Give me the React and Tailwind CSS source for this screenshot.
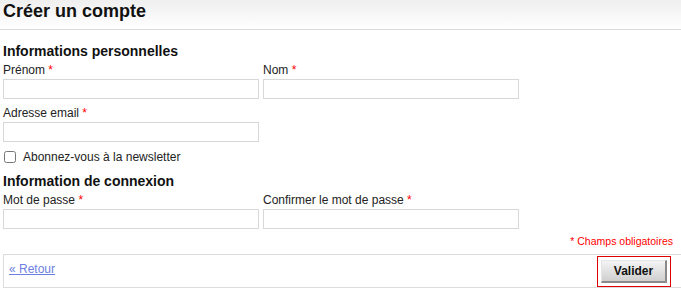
import { useState } from "react";

const Req = () => <span className="text-[#ff0000]"> *</span>;

function Field({ label, required, type = "text", autoFocus }) {
  return (
    <div className="flex flex-col">
      <label className="text-[12px] leading-[14px] text-[#222] h-[14px] mb-[2px]">
        {label}
        {required && <Req />}
      </label>
      <input
        type={type}
        autoFocus={autoFocus}
        className="w-[256px] h-[20px] border border-[#d8d8d8] bg-white px-1 text-[12px] outline-none"
      />
    </div>
  );
}

export default function App() {
  const [newsletter, setNewsletter] = useState(false);

  return (
    <div
      className="w-[681px] h-[296px] overflow-hidden bg-white text-[#111]"
      style={{ fontFamily: '"Liberation Sans", Arial, sans-serif' }}
    >
      <div className="pl-[3px]">
        {/* page title */}
        <div className="h-[30px] border-b border-[#dcdcdc] bg-gradient-to-b from-[#efefef] to-white -ml-[3px] pl-[3px]">
          <h1 className="text-[18px] font-bold leading-[20px] pt-[1px]">Créer un compte</h1>
        </div>

        <h2 className="mt-[12px] text-[14px] font-bold leading-[18px]">Informations personnelles</h2>
        <div className="flex gap-[4px] mt-[3px]">
          <Field label="Prénom" required autoFocus />
          <Field label="Nom" required />
        </div>
        <div className="mt-[7px]">
          <Field label="Adresse email" required type="email" />
        </div>

        <label className="flex items-center gap-[7px] mt-[8px] h-[14px] text-[12px] leading-[14px] text-[#222]">
          <input
            type="checkbox"
            checked={newsletter}
            onChange={(e) => setNewsletter(e.target.checked)}
            className="w-[12px] h-[12px] ml-[1px] m-0"
          />
          Abonnez-vous à la newsletter
        </label>

        <h2 className="mt-[8px] text-[14px] font-bold leading-[18px]">Information de connexion</h2>
        <div className="flex gap-[4px] mt-[3px]">
          <Field label="Mot de passe" required type="password" />
          <Field label="Confirmer le mot de passe" required type="password" />
        </div>

        <p className="mt-[6px] pr-[8px] text-right text-[10.5px] leading-[13px] text-[#ff0000]">
          * Champs obligatoires
        </p>

        {/* actions */}
        <div className="mt-[6px] h-[34px] border border-r-0 border-[#dcdcdc] flex items-center justify-between pl-[5px] pr-[14px]">
          <a href="#" className="text-[12px] text-[#6d7fe0] underline leading-[14px] -mt-[4px]">
            « Retour
          </a>
          <div className="outline outline-1 outline-[#e00000] outline-offset-[3px]">
            <button
              type="submit"
              className="w-[66px] h-[23px] text-[12px] font-bold text-[#111] border border-t-[#e5e5e5] border-l-[#e5e5e5] border-r-[#8a8a8a] border-b-[#8a8a8a] border-r-2 border-b-2 bg-gradient-to-b from-[#f4f4f4] to-[#cfcfcf] block"
            >
              Valider
            </button>
          </div>
        </div>
      </div>
    </div>
  );
}
